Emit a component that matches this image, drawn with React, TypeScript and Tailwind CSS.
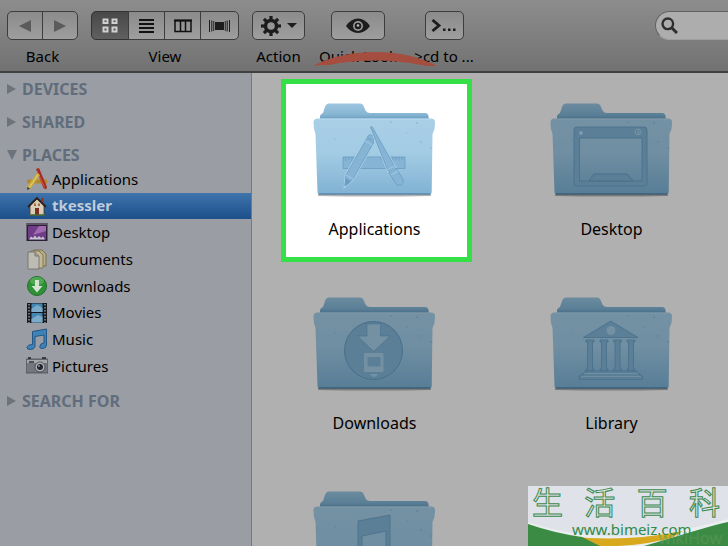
import type { ReactNode } from "react";
import clsx from "clsx";

const glyphFill = "#86b4d4";
const glyphStroke = "#6a9dc1";
const glyphLight = "#a9cfe7";

const ApplicationsGlyph = () => (
  <g fill={glyphFill} stroke={glyphStroke} strokeWidth="0.8">
    <path d="M30 55H92V66.500H30Z" />
    <path d="M33 55v4M36 55v3M39 55v4M42 55v3M68 55v3M77 55v3M80 55v4M83 55v3M86 55v4M89 55v3" />
    <path d="M54 36 61 40 40 77 32 84 33 73Z" stroke={glyphLight} strokeWidth="2.500" />
    <path d="M54 36 61 40 40 77 32 84 33 73Z" />
    <path d="M32 84 33 77 37.500 79.500Z" fill={glyphStroke} />
    <path d="M55 34Q57 31 60.500 34Q62 36 60.500 38.500L54.500 35.500Z" />
    <path d="M33 73 40 77M52 39 59 43" fill="none" stroke={glyphLight} />
    <path d="M57.500 25Q59 23 61 28L82 65 75 69Z" stroke={glyphLight} strokeWidth="2.500" />
    <path d="M57.500 25Q59 23 61 28L82 65 75 69Z" />
    <path d="M76 70 83 66 90 77Q91 83 87 83.500Q83 84 81 79Z" />
    <path d="M74 68 82 64M78 73 85 69" fill="none" stroke={glyphLight} />
  </g>
);

const DesktopGlyph = () => (
  <g>
    <path
      d="M27 25H94Q97 25 97 28V81Q97 84 94 84H27Q24 84 24 81V28Q24 25 27 25ZM29.500 36V79H92V36Z"
      fill={glyphFill}
      fillRule="evenodd"
      stroke={glyphStroke}
      strokeWidth="0.8"
    />
    <path d="M39 79 44 72H77L83 79Z" fill={glyphFill} stroke={glyphStroke} />
    <circle cx="31" cy="31" r="2" fill="#b9dcf0" />
    <circle cx="88" cy="30" r="2.800" fill="none" stroke="#b9dcf0" strokeWidth="0.8" />
    <path d="M88 28.500V31H90" fill="none" stroke="#b9dcf0" strokeWidth="0.8" />
  </g>
);

const DownloadsGlyph = () => (
  <g>
    <circle cx="60.500" cy="54.500" r="29" fill={glyphFill} stroke={glyphStroke} />
    <path
      d="M54 28H67.500V40H77L60.700 55.500 44.500 40H54Z"
      fill={glyphLight}
      stroke={glyphStroke}
      strokeWidth="0.600"
    />
    <path
      d="M52.500 57H69Q70.500 57 70.500 58.500V74.500Q70.500 76 69 76H52.500Q51 76 51 74.500V58.500Q51 57 52.500 57ZM54.500 61V70.500H67.500V61Z"
      fill={glyphLight}
      fillRule="evenodd"
    />
    <path d="M57 78H65Q63 81 61 81T57 78Z" fill={glyphLight} />
  </g>
);

const LibraryGlyph = () => (
  <g fill={glyphFill} stroke={glyphStroke} strokeWidth="0.800">
    <path d="M60.700 25 88 41.500H33.500Z" />
    <circle cx="61" cy="34.500" r="4.500" fill={glyphLight} stroke="none" />
    {[40, 54, 67.5, 81].map((x) => (
      <path
        key={x}
        d={`M${x - 4} 44h8v2h-1.500v27h1.500v2h-8v-2h1.500v-27h-1.500Z`}
      />
    ))}
    <path d="M35 75H87V77.500H90V80H92.500V83.500H29V80H32V77.500H35Z" />
    <path d="M34 77.500H88M31 80.500H91" fill="none" stroke={glyphLight} />
  </g>
);

const MusicGlyph = () => (
  <g fill={glyphFill} stroke={glyphStroke} strokeWidth="0.800">
    <path d="M45 31 77 25V72Q77 79 69 79T62 73Q63 67 73 68V41L49 46V79Q49 86 41 86T34 80Q35 74 45 75Z" />
  </g>
);

const Folder = ({ children }: { children: ReactNode }) => (
  <svg viewBox="0 0 123 96" className="w-full overflow-visible" aria-hidden="true">
    <defs>
      <linearGradient id="back" x2="0" y2="1">
        <stop offset="0" stopColor="#9dc6e0" />
        <stop offset="0.600" stopColor="#86b5d3" />
        <stop offset="0.850" stopColor="#6a9dbf" />
      </linearGradient>
      <linearGradient id="front" x2="0" y2="1">
        <stop offset="0" stopColor="#a9cfe7" />
        <stop offset="0.450" stopColor="#a3cbe4" />
        <stop offset="1" stopColor="#80b2d3" />
      </linearGradient>
    </defs>
    <path d="M5 91H118V94Q61 95 5 94Z" fill="#000" opacity="0.300" />
    <path
      d="M7 20V14Q7.500 12 10 11L12 5Q13 1.500 16 1.500H47Q50 1.500 51 5L52.500 8.500Q54 11 57 11H112Q115 11 115.500 14L116 20Z"
      fill="url(#back)"
    />
    <path
      d="M4 16.500H118.500Q122.500 17 122 21L121.500 27 119.500 32 118.700 90Q118.700 92.500 116 92.500H7Q4.500 92.500 4.500 90L2.500 32 1 27 .5 21Q0 17 4 16.500Z"
      fill="url(#front)"
    />
    <path d="M4 17H118.500" stroke="#bfdef0" strokeWidth="0.800" />
    <path d="M6 92H117" stroke="#47718f" strokeWidth="1.200" />
    <g fill="#5f94b5" opacity="0.600">
      <circle cx="78" cy="20" r=".7" />
      <circle cx="104" cy="21" r=".8" />
      <circle cx="108" cy="40" r=".7" />
      <circle cx="22" cy="37" r=".6" />
      <circle cx="118" cy="46" r=".7" />
      <circle cx="94" cy="31" r=".5" />
    </g>
    {children}
  </svg>
);

const folders = [
  { name: "Applications", glyph: <ApplicationsGlyph />, active: true },
  { name: "Desktop", glyph: <DesktopGlyph /> },
  { name: "Downloads", glyph: <DownloadsGlyph /> },
  { name: "Library", glyph: <LibraryGlyph /> },
  { name: "", glyph: <MusicGlyph /> },
];

const places = [
  {
    name: "Applications",
    icon: (
      <>
        <path d="M1 11.500H21V15.500H1Z" fill="#b5892e" />
        <path d="M10 1 13 0 21 19 20 21.500 17.500 20Z" fill="#a52a22" />
        <path d="M11 3 18.500 19" stroke="#d8665a" strokeWidth="0.800" />
        <path d="M11 5 14 7 5 20 1 22 1.500 18Z" fill="#c9ac3c" />
        <path d="M12 6.500 3.500 19.500" stroke="#e3d68a" strokeWidth="0.900" />
        <path d="M1.500 19 4 20.500 1 22Z" fill="#333" />
      </>
    ),
  },
  {
    name: "tkessler",
    active: true,
    icon: (
      <>
        <path d="M4 10 11 4 18 10V20H4Z" fill="#d8cdb6" stroke="#4a3424" strokeWidth="0.800" />
        <path d="M2 12 11 3 20 12" fill="none" stroke="#2a211c" strokeWidth="1.800" />
        <path d="M15 3H17.500V8L15 6Z" fill="#8f3426" />
        <path d="M9 13H13V20H9Z" fill="#7a2e1d" />
        <path d="M8 8.500H10V11H8ZM12 8.500H14V11H12Z" fill="#a66c41" />
        <path d="M3 20H19" stroke="#4b7535" strokeWidth="1.300" />
      </>
    ),
  },
  {
    name: "Desktop",
    icon: (
      <>
        <path d="M.5 2H21.500V20H.5Z" fill="#2c2035" />
        <path d="M2 5H20V18.500H2Z" fill="#6f3d88" />
        <path d="M7 14 13 5H20V10Z" fill="#a06bb0" />
        <path d="M1 3H21" stroke="#8c8398" />
        <path d="M3 18.500 5 15.500 7 17 9 14.500 11 17 13 15 15 17 17 15.500 19 18.500Z" fill="#c4c4cf" />
      </>
    ),
  },
  {
    name: "Documents",
    icon: (
      <>
        <path d="M8 2H16L20 6V18H8Z" fill="#b8ac84" stroke="#6e623c" strokeWidth="0.800" />
        <path d="M5 3H13L17 7V20H5Z" fill="#c0b898" stroke="#776c4a" strokeWidth="0.800" />
        <path d="M2 4H9L13 8V21H2Z" fill="#bdbcb4" stroke="#6e6a5d" strokeWidth="0.800" />
        <path d="M9 4V8H13" fill="#aaa390" stroke="#6e6a5d" strokeWidth="0.800" />
      </>
    ),
  },
  {
    name: "Downloads",
    icon: (
      <>
        <circle cx="11" cy="11" r="9.500" fill="#2f9136" stroke="#236e2a" />
        <ellipse cx="11" cy="6" rx="7" ry="4" fill="#5cb25c" opacity="0.700" />
        <path d="M9 5H13V11H16.500L11 17.500 5.500 11H9Z" fill="#d6e2d2" />
      </>
    ),
  },
  {
    name: "Movies",
    icon: (
      <>
        <path d="M1 1H21V21H1Z" fill="#15181d" />
        <path d="M5.500 1.500H16.500V10H5.500ZM5.500 11H16.500V20.500H5.500Z" fill="#4486b2" />
        <path d="M5.500 7 11 3 16.500 6V10H5.500ZM5.500 17 12 13 16.500 15V20.500H5.500Z" fill="#7babc9" />
        <path d="M3 2V21M19 2V21" stroke="#8f9398" strokeWidth="1.500" strokeDasharray="1.500 1.500" />
      </>
    ),
  },
  {
    name: "Music",
    icon: (
      <path
        d="M6.500 3.500 20.500 1V17Q20 20.500 16.500 20.500T14 18Q14.500 15 18 15V7L9 8.500V18.500Q8 21.500 4.500 21.500T1 19.500Q1.500 16.500 6.500 16.500Z"
        fill="#3d82b8"
        stroke="#1b4f7d"
        strokeWidth="0.900"
      />
    ),
  },
  {
    name: "Pictures",
    icon: (
      <>
        <path d="M1 4H21Q22 4 22 5V18H0V5Q0 4 1 4Z" fill="#74777d" stroke="#43464c" strokeWidth="0.700" />
        <path d="M1 5H21V8H1Z" fill="#a4a7ab" />
        <path d="M2 3H5M16 3H20" stroke="#222" strokeWidth="1.500" />
        <path d="M3 7H8" stroke="#333" strokeWidth="1.500" />
        <circle cx="14" cy="12" r="5" fill="#b0b2b6" stroke="#3b3e42" strokeWidth="0.800" />
        <circle cx="14" cy="12" r="3" fill="#20252e" />
        <circle cx="13" cy="11" r="1" fill="#8797b1" />
      </>
    ),
  },
];

const toolButton =
  "flex h-[29px] items-center justify-center border border-[#3d3d3d] bg-linear-to-b from-[#8b8b8b] to-[#9e9e9e] text-[#1c1c1c]";

const ToolItem = ({ label, children, className }: { label: string; children: ReactNode; className?: string }) => (
  <div className={clsx("flex flex-none flex-col items-center", className)}>
    <div className="flex">{children}</div>
    <span className="mt-1.5 text-[15px] leading-5 whitespace-nowrap text-black">{label}</span>
  </div>
);

const Toolbar = () => (
  <header className="relative flex flex-none gap-[13px] border-b-2 border-[#3f3f3f] bg-linear-to-b from-[#8d8d8d] to-[#727272] pt-[11px] pb-[5px] pl-[7px]">
    <ToolItem label="Back">
      <button aria-label="Back" className={clsx(toolButton, "w-9 rounded-l-[5px]")}>
        <svg viewBox="0 0 12 12" className="size-3">
          <path d="M0 6 12 0V12Z" fill="#5b5b5b" />
        </svg>
      </button>
      <button aria-label="Forward" className={clsx(toolButton, "-ml-px w-9 rounded-r-[5px]")}>
        <svg viewBox="0 0 12 12" className="size-3">
          <path d="M12 6 0 0V12Z" fill="#5b5b5b" />
        </svg>
      </button>
    </ToolItem>
    <ToolItem label="View">
      <button
        aria-label="Icons"
        className="flex h-[29px] w-[38px] items-center justify-center rounded-l-[5px] border border-[#333] bg-linear-to-b from-[#484848] to-[#606060]"
      >
        <svg viewBox="0 0 16 15" className="h-[15px] w-4" fill="none" stroke="#d0d0d0" strokeWidth="2">
          <path d="M1.500 1.500H5.500V5H1.500ZM10.500 1.500H14.500V5H10.500ZM1.500 9.500H5.500V13.500H1.500ZM10.500 9.500H14.500V13.500H10.500Z" />
        </svg>
      </button>
      <button aria-label="List" className={clsx(toolButton, "-ml-px w-[37px]")}>
        <svg viewBox="0 0 15 14" className="h-3.5 w-[15px]" stroke="#111" strokeWidth="1.800">
          <path d="M0 1H15M0 5H15M0 9H15M0 13H15" />
        </svg>
      </button>
      <button aria-label="Columns" className={clsx(toolButton, "-ml-px w-[37px]")}>
        <svg viewBox="0 0 18 14" className="h-3.5 w-[18px]" fill="none" stroke="#111" strokeWidth="1.500">
          <path d="M1 1.500H17V12.500H1ZM6.500 1V13M11.500 1V13" />
          <path d="M0 1.500H18" strokeWidth="2" />
        </svg>
      </button>
      <button aria-label="Cover Flow" className={clsx(toolButton, "-ml-px w-[39px] rounded-r-[5px]")}>
        <svg viewBox="0 0 21 12" className="h-3 w-[21px]" fill="currentColor">
          <path d="M6 2H15V10H6ZM0 0H1V12H0ZM2.300 .5H3.300V11.500H2.300ZM4.300 1H5.200V11H4.300ZM20 0H21V12H20ZM17.700 .5H18.700V11.500H17.700ZM15.800 1H16.700V11H15.800Z" />
        </svg>
      </button>
    </ToolItem>
    <ToolItem label="Action" className="w-[53px]">
      <button aria-label="Action" className={clsx(toolButton, "w-[53px] gap-1.5 rounded-[5px]")}>
        <svg viewBox="-10 -10 20 20" className="size-5">
          <circle r="5.500" fill="none" stroke="currentColor" strokeWidth="3.500" />
          {[0, 45, 90, 135, 180, 225, 270, 315].map((deg) => (
            <path key={deg} d="M-1.600 -6.500H1.600V-10H-1.600Z" fill="currentColor" transform={`rotate(${deg})`} />
          ))}
        </svg>
        <svg viewBox="0 0 10 5" className="h-[5px] w-2.5">
          <path d="M0 0H10L5 5Z" fill="currentColor" />
        </svg>
      </button>
    </ToolItem>
    <ToolItem label="Quick Look" className="w-20">
      <button aria-label="Quick Look" className={clsx(toolButton, "w-[54px] rounded-[5px]")}>
        <svg viewBox="0 0 24 16" className="h-4 w-6">
          <path d="M0 8Q5 .5 12 .5T24 8Q19 15 12 15T0 8Z" fill="currentColor" />
          <circle cx="12" cy="8" r="5" fill="#999" />
          <circle cx="12" cy="8" r="3.300" fill="currentColor" />
          <circle cx="12" cy="7.500" r="1.300" fill="#bbb" />
        </svg>
      </button>
    </ToolItem>
    <ToolItem label=">cd to ..." className="w-[66px]">
      <button aria-label="cd to" className={clsx(toolButton, "w-[39px] rounded-[5px] border-[#2e2e2e]")}>
        <svg viewBox="0 0 26 14" className="h-3.5 w-[26px]">
          <path d="M1.500 1 8 6.500 1.500 12" fill="none" stroke="currentColor" strokeWidth="2.800" />
          <path d="M12 9.500H14.500V12H12ZM17 9.500H19.500V12H17ZM22 9.500H24.500V12H22Z" fill="currentColor" />
        </svg>
      </button>
    </ToolItem>
    <label className="ml-auto flex h-[29px] w-[73px] items-center rounded-l-full border border-r-0 border-[#626262] border-b-[#a0a0a0] bg-[#adadad] pl-[5px]">
      <svg viewBox="0 0 17 17" className="size-[17px] flex-none" fill="none" stroke="#2e2e2e">
        <circle cx="6.800" cy="6.800" r="5.300" strokeWidth="2.400" />
        <path d="M10.500 10.500 16 16" strokeWidth="3" />
      </svg>
      <input type="search" aria-label="Search" className="min-w-0 flex-1 bg-transparent text-sm outline-none" />
    </label>
    {/* red swoosh over the labels */}
    <svg viewBox="0 0 124 14" className="absolute top-[52px] left-[313px] h-3.5 w-[124px]" aria-hidden="true">
      <path d="M0 14Q26 0 62 0T124 14Q118 15 108 13Q86 8.500 62 8.500T16 13Q6 13 0 14Z" fill="#a54d3f" />
    </svg>
  </header>
);

const Section = ({ title, open, children }: { title: string; open?: boolean; children?: ReactNode }) => (
  <section>
    <button className="flex h-[22px] items-center gap-[5px] pl-[7px] text-base font-bold text-[#616d7c]">
      <svg viewBox="0 0 10 10" className="size-2.5" fill="#6c737d">
        <path d={open ? "M0 0H10L5 10Z" : "M0 0V10L9 5Z"} />
      </svg>
      {title}
    </button>
    {children}
  </section>
);

const Sidebar = () => (
  <nav className="flex w-[252px] flex-none flex-col gap-[11px] border-r border-[#77797d] bg-[#9a9da3] pt-[5px]">
    <Section title="DEVICES" />
    <Section title="SHARED" />
    <Section title="PLACES" open>
      <ul className="flex h-[213px] flex-col justify-between">
        {places.map(({ name, icon, active }) => (
          <li key={name}>
            <a
              href="#"
              className={clsx(
                "flex h-[26px] items-center gap-1 pl-[26px] text-[15px]",
                active
                  ? "bg-linear-to-b from-[#3e74ab] to-[#1d4f8b] font-bold text-[#c0cbd9]"
                  : "text-black"
              )}
            >
              <svg viewBox="0 0 22 22" className="size-[22px]" fill="none" aria-hidden="true">
                {icon}
              </svg>
              {name}
            </a>
          </li>
        ))}
      </ul>
    </Section>
    <Section title="SEARCH FOR" />
  </nav>
);

const Watermark = () => (
  <div className="absolute right-0 bottom-0 h-[60px] w-[200px] bg-[#dfe2e8]">
    <svg viewBox="0 0 200 60" className="absolute inset-0 size-full" aria-hidden="true">
      <path d="M0 36Q40 50 90 50T200 33V60H0Z" fill="#eaeeee" />
      <path d="M40 50Q95 57 155 45L130 60H40Z" fill="#d9a91d" />
      <path d="M90 60Q120 59 155 49L160 60Z" fill="#eaeeee" />
      <path d="M0 38Q26 47 54 51L72 60H0Z" fill="#3c8b45" />
      <path d="M116 60Q150 50 170 44T200 36V60Z" fill="#3c8b45" />
    </svg>
    <p className="absolute right-1.5 bottom-0 text-base leading-4 text-[#5d9a5c]/60">wikiHow</p>
    <div className="relative flex justify-between pr-2 pl-1 font-['Liberation_Sans','Noto_Sans_CJK_SC',sans-serif] text-[31px] leading-[35px] text-transparent [-webkit-text-stroke:1px_#3a8a4c]">
      <span>生</span>
      <span>活</span>
      <span>百</span>
      <span>科</span>
    </div>
    <p className="relative pl-[44px] text-[15px] leading-4 text-[#2f8a49]">www.bimeiz.com</p>
  </div>
);

export default function App() {
  return (
    <div className="relative flex h-screen flex-col overflow-hidden bg-[#b0b0b0] font-['Noto_Sans','Noto_Sans_CJK_SC',sans-serif]">
      <Toolbar />
      <div className="flex min-h-0 flex-1">
        <Sidebar />
        <main className="grid flex-1 grid-cols-[repeat(auto-fill,191px)] content-start gap-x-[46px] gap-y-[11px] overflow-hidden pt-[6px] pl-[29px]">
          {folders.map(({ name, glyph, active }) => (
            <figure
              key={name}
              className={clsx(
                "h-[183px] border-5 pt-[18px] pr-[31px] pl-[27px]",
                active ? "border-[#35e047] bg-white" : "border-transparent"
              )}
            >
              <div className={clsx(!active && "brightness-70 saturate-110")}>
                <Folder>{glyph}</Folder>
              </div>
              {name && (
                <figcaption className="mt-[19px] text-center text-base leading-6 text-black">{name}</figcaption>
              )}
            </figure>
          ))}
        </main>
      </div>
      <Watermark />
    </div>
  );
}
